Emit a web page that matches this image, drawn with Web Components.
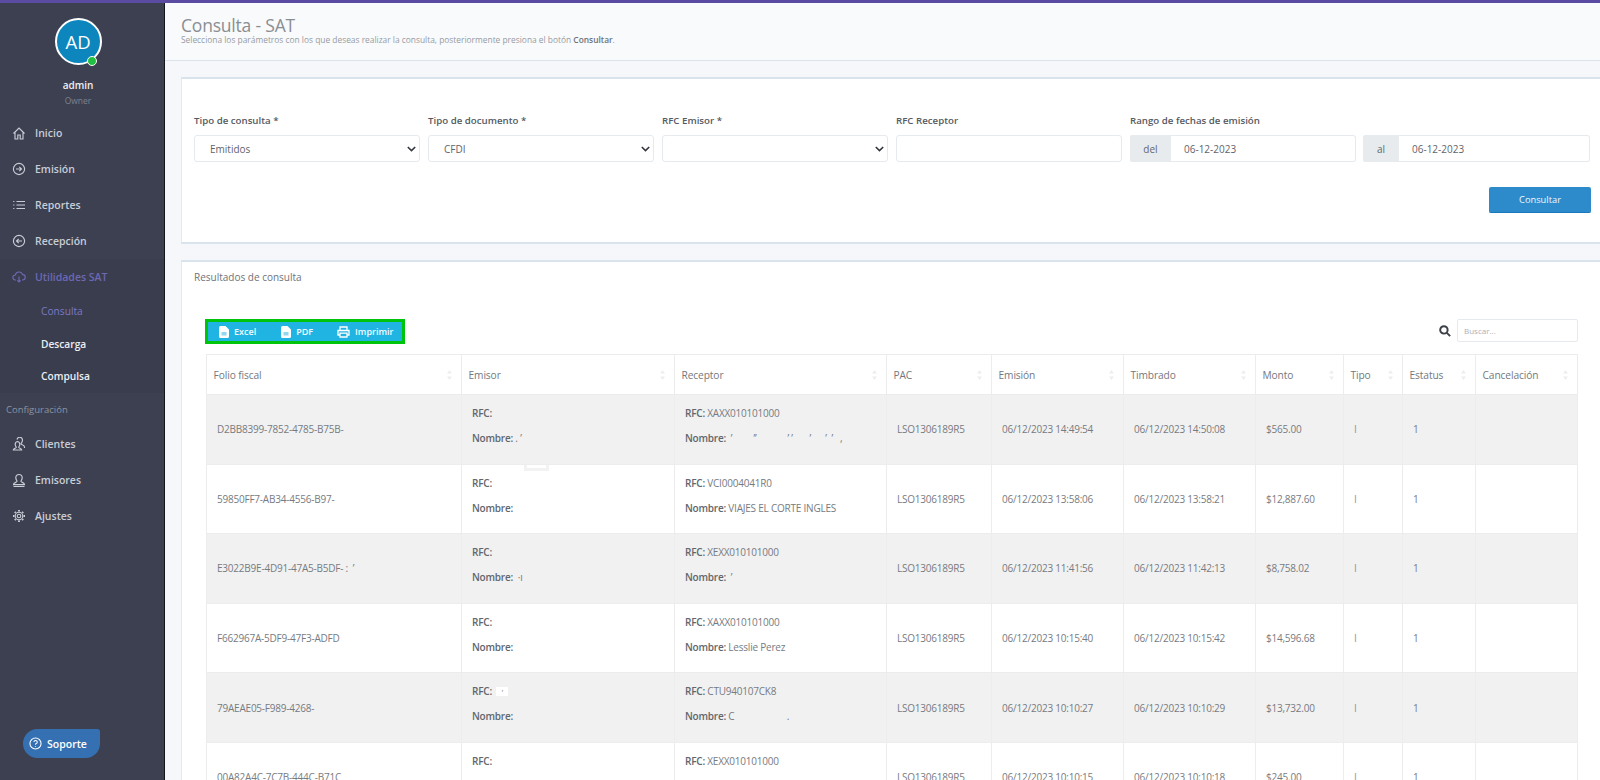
<!DOCTYPE html>
<html lang="es">
<head>
<meta charset="utf-8">
<title>Consulta - SAT</title>
<style>
    html, body { margin: 0; height: 100%; overflow: hidden; background: #f5f7fa; }
    body { font-family: "Open Sans", "Noto Sans", sans-serif; }
</style>
</head>
<body>
<app-shell></app-shell>
<script>
const ICONS = {
    home: '<path d="M1.5 7.5 7 2l5.5 5.5M3 6.5V13h2.8V9h2.4v4H11V6.500"/>',
    right: '<circle cx="7" cy="7" r="5.6"/><path d="M4 7h5.500M7.300 4.800 9.500 7l-2.200 2.200"/>',
    list: '<path d="M4.500 3.500H13M4.500 7H13M4.500 10.500H13M1.200 3.500h1.200M1.200 7h1.200M1.200 10.500h1.200"/>',
    left: '<circle cx="7" cy="7" r="5.600"/><path d="M10 7H4.500M6.700 4.800 4.500 7l2.200 2.200"/>',
    cloud: '<path d="M4 10H3.500A2.500 2.500 0 0 1 3.300 5 3.800 3.800 0 0 1 10.600 4.600 2.700 2.700 0 0 1 10.500 10H10M7 6.500v5.500M5.300 10.300 7 12l1.700-1.700"/>',
    users: '<path d="M5 2.500a2.800 3 0 0 1 5.500.5c0 1.800-1 3-1.500 3.800 0 1 3.500 1.200 3.500 3.200v1M6 4.500c-1.700 0-2.800 1.200-2.800 3 0 1.200.7 2 1.100 2.700 0 1-3 1-3 2.800h8.400c0-1.800-3-1.800-3-2.800.4-.7 1.100-1.500 1.100-2.700 0-1.800-1.100-3-2.800-3z"/>',
    user: '<path d="M7 1.500c-2 0-3.200 1.400-3.200 3.300 0 1.500.8 2.600 1.300 3.400 0 1.200-3.600 1.300-3.600 3.400h11c0-2.100-3.600-2.200-3.600-3.400.5-.8 1.300-1.900 1.300-3.400 0-1.900-1.200-3.300-3.200-3.300zM1.500 13.500h11"/>',
    gear: '<circle cx="7" cy="7" r="1.800"/><circle cx="7" cy="7" r="3.800"/><path d="M7 1v1.500M7 11.500V13M1 7h1.500M11.500 7H13M2.800 2.800l1 1M10.200 10.200l1 1M2.800 11.200l1-1M10.200 3.800l1-1" stroke-width="1.900"/>',
    help: '<circle cx="7" cy="7" r="6"/><path d="M5.300 5.500A1.800 1.800 0 1 1 7.500 7.300c-.4.2-.5.500-.5 1M7 9.700v.8"/>'
};

function icon(name, size) {
    return `<svg width="${size}" height="${size}" viewBox="0 0 14 14" fill="none" stroke="currentColor" stroke-width="1.150">${ICONS[name]}</svg>`;
}

class NavItem extends HTMLElement {
    constructor() {
        super();
        this.attachShadow({ mode: 'open' });
        const name = this.getAttribute('icon');
        this.shadowRoot.innerHTML = `
            <style>
                :host {
                    display: flex;
                    align-items: center;
                    height: 36px;
                    padding-left: 12px;
                    font-size: 10.500px;
                    font-weight: 600;
                    color: #c9cdd6;
                }
                :host([active]) { color: #6d68b4; }
                :host([sub]) { padding-left: 41px; height: 32.500px; color: #eceef2; font-size: 10.200px; }
                :host([sub][active]) { color: #7d78c4; font-weight: 500; }
                svg { width: 14px; height: 14px; margin-right: 9px; flex: none; }
            </style>
            ${name ? icon(name, 14) : ''}<slot></slot>
        `;
    }
}
customElements.define('nav-item', NavItem);

class SideBar extends HTMLElement {
    constructor() {
        super();
        this.attachShadow({ mode: 'open' });
        this.shadowRoot.innerHTML = `
            <style>
                :host {
                    display: block;
                    position: relative;
                    width: 164px;
                    flex: none;
                    background: #3c4051;
                    border-right: 1px solid #15161c;
                }
                .profile { display: flex; flex-direction: column; align-items: center; padding: 15px 8px 0 0; height: 112px; box-sizing: border-box; }
                .avatar {
                    position: relative;
                    width: 47px;
                    height: 47px;
                    box-sizing: border-box;
                    border: 2px solid #fff;
                    border-radius: 50%;
                    background: #0c86bc;
                    color: #fff;
                    font-size: 18.500px;
                    display: flex;
                    align-items: center;
                    justify-content: center;
                }
                .dot {
                    position: absolute;
                    right: 2.500px;
                    bottom: -3px;
                    width: 8px;
                    height: 8px;
                    border: 1px solid #fff;
                    border-radius: 50%;
                    background: #22c040;
                }
                .name { margin-top: 13px; font-size: 10px; font-weight: 600; color: #eef0f4; }
                .role { margin-top: 3px; font-size: 8.500px; color: #7d8291; }
                .group { background: #393d4e; }
                .caption { height: 33px; display: flex; align-items: center; padding-left: 6px; font-size: 9.500px; color: #8b93a3; }
                .help {
                    position: absolute;
                    left: 23px;
                    top: 726px;
                    width: 77px;
                    height: 29px;
                    box-sizing: border-box;
                    padding-left: 6px;
                    display: flex;
                    align-items: center;
                    gap: 5px;
                    background: #3571b2;
                    border-radius: 15px 3px 15px 15px;
                    color: #fff;
                    font-size: 10.500px;
                    font-weight: 600;
                }
            </style>
            <div class="profile">
                <div class="avatar">AD<span class="dot"></span></div>
                <div class="name">admin</div>
                <div class="role">Owner</div>
            </div>
            <nav-item icon="home">Inicio</nav-item>
            <nav-item icon="right">Emisión</nav-item>
            <nav-item icon="list">Reportes</nav-item>
            <nav-item icon="left">Recepción</nav-item>
            <div class="group">
                <nav-item icon="cloud" active>Utilidades SAT</nav-item>
                <nav-item sub active>Consulta</nav-item>
                <nav-item sub>Descarga</nav-item>
                <nav-item sub>Compulsa</nav-item>
            </div>
            <div class="caption">Configuración</div>
            <nav-item icon="users">Clientes</nav-item>
            <nav-item icon="user">Emisores</nav-item>
            <nav-item icon="gear">Ajustes</nav-item>
            <div class="help">${icon('help', 13)}<span>Soporte</span></div>
        `;
    }
}
customElements.define('side-bar', SideBar);

class PageHeader extends HTMLElement {
    constructor() {
        super();
        this.attachShadow({ mode: 'open' });
        this.shadowRoot.innerHTML = `
            <style>
                :host {
                    display: block;
                    box-sizing: border-box;
                    height: 58px;
                    padding: 13px 0 0 16px;
                    background: #f9fafc;
                    border-bottom: 1px solid #dde3ea;
                }
                h1 { margin: 0; font-size: 17.500px; line-height: 18px; font-weight: 400; color: #8a8e93; letter-spacing: -.2px; }
                p { margin: 0; font-size: 8.400px; line-height: 11px; color: #969aa2; letter-spacing: 0; }
                b { font-weight: 600; color: #6d7278; }
            </style>
            <h1>Consulta - SAT</h1>
            <p>Selecciona los parámetros con los que deseas realizar la consulta, posteriormente presiona el botón <b>Consultar</b>.</p>
        `;
    }
}
customElements.define('page-header', PageHeader);

class FormField extends HTMLElement {
    constructor() {
        super();
        this.attachShadow({ mode: 'open' });
        const kind = this.getAttribute('kind') || 'input';
        const chevron = kind === 'select'
            ? '<svg width="9" height="6" viewBox="0 0 9 6" fill="none" stroke="#33373d" stroke-width="1.600"><path d="M.8 1l3.700 3.600L8.200 1"/></svg>'
            : '';
        this.shadowRoot.innerHTML = `
            <style>
                :host { display: block; min-width: 0; }
                label { display: block; height: 28px; padding-top: 7px; box-sizing: border-box; font-size: 9.700px; line-height: 14px; font-weight: 600; color: #555a62; }
                .control {
                    height: 27px;
                    box-sizing: border-box;
                    padding: 0 3px 0 15px;
                    display: flex;
                    align-items: center;
                    justify-content: space-between;
                    background: #fff;
                    border: 1px solid #e6eaee;
                    border-radius: 3px;
                    font-size: 10px;
                    color: #5f646b;
                }
            </style>
            <label>${this.getAttribute('label')}</label>
            <div class="control"><span><slot></slot></span>${chevron}</div>
        `;
    }
}
customElements.define('form-field', FormField);

class DateInput extends HTMLElement {
    constructor() {
        super();
        this.attachShadow({ mode: 'open' });
        this.shadowRoot.innerHTML = `
            <style>
                :host { display: flex; height: 27px; min-width: 0; font-size: 10px; color: #5f646b; }
                .pre { width: ${this.getAttribute('pre-width')}px; flex: none; display: flex; align-items: center; justify-content: center; background: #e8ebee; color: #62676d; border-radius: 2px 0 0 2px; }
                .val { flex: 1; box-sizing: border-box; display: flex; align-items: center; padding-left: 13px; border: 1px solid #e6eaee; border-left: 0; border-radius: 0 3px 3px 0; background: #fff; }
            </style>
            <span class="pre">${this.getAttribute('pre')}</span>
            <span class="val"><slot></slot></span>
        `;
    }
}
customElements.define('date-input', DateInput);

class SearchForm extends HTMLElement {
    constructor() {
        super();
        this.attachShadow({ mode: 'open' });
        this.shadowRoot.innerHTML = `
            <style>
                :host {
                    display: block;
                    box-sizing: border-box;
                    height: 167px;
                    margin: 16px -20px 0 16px;
                    padding: 28px 0 0 12px;
                    background: #fff;
                    border: 1px solid #dde6ee;
                    border-top-width: 2px;
                    border-bottom-width: 2px;
                    border-color: #d9e3ec;
                    border-left-color: #e3e9ef;
                }
                .grid { display: grid; grid-template-columns: repeat(6, 226px); column-gap: 8px; width: 1396px; }
                .range { grid-column: 5 / 7; }
                .range label { display: block; height: 28px; padding-top: 7px; box-sizing: border-box; font-size: 9.700px; line-height: 14px; font-weight: 600; color: #555a62; }
                .dates { display: grid; grid-template-columns: 226px 227px; column-gap: 7px; }
                .actions { display: flex; justify-content: flex-end; width: 1397px; margin-top: 25px; }
                button {
                    width: 102px;
                    height: 26px;
                    padding: 0;
                    border: 0;
                    border-bottom: 1px solid #1a79bd;
                    border-radius: 2px;
                    background: #2d8bcb;
                    color: #f2f8fc;
                    font: 500 9.300px "Open Sans", sans-serif;
                }
            </style>
            <div class="grid">
                <form-field label="Tipo de consulta *" kind="select">Emitidos</form-field>
                <form-field label="Tipo de documento *" kind="select">CFDI</form-field>
                <form-field label="RFC Emisor *" kind="select"></form-field>
                <form-field label="RFC Receptor"></form-field>
                <div class="range">
                    <label>Rango de fechas de emisión</label>
                    <div class="dates">
                        <date-input pre="del" pre-width="41">06-12-2023</date-input>
                        <date-input pre="al" pre-width="36">06-12-2023</date-input>
                    </div>
                </div>
            </div>
            <div class="actions"><button>Consultar</button></div>
        `;
    }
}
customElements.define('search-form', SearchForm);

class ExportBar extends HTMLElement {
    constructor() {
        super();
        this.attachShadow({ mode: 'open' });
        const doc = `<svg width="10" height="12" viewBox="0 0 10 12"><path fill="#fff" d="M1.500 0H6.500L10 3.500V10.500A1.500 1.500 0 0 1 8.500 12H1.500A1.500 1.500 0 0 1 0 10.500V1.500A1.500 1.500 0 0 1 1.500 0Z"/><rect x="2.500" y="6" width="5" height="3.500" fill="#8fd6ee"/></svg>`;
        const print = `<svg width="13" height="12" viewBox="0 0 13 12" fill="none" stroke="#fff" stroke-width="1.300"><path d="M3 4V1h7v3M3 9H1V4.500h11V9h-2M3 7.200h7V11H3z"/></svg>`;
        this.shadowRoot.innerHTML = `
            <style>
                :host {
                    display: flex;
                    align-items: center;
                    box-sizing: border-box;
                    width: 200px;
                    height: 25px;
                    border: 3px solid #00c40b;
                    background: #20b4e3;
                    color: #f4fbfe;
                    font-size: 9px;
                    font-weight: 600;
                }
                span { display: flex; align-items: center; gap: 5px; }
                span:nth-of-type(1) { margin-left: 11px; }
                span:nth-of-type(2) { margin-left: 25px; }
                span:nth-of-type(3) { margin-left: 24px; }
            </style>
            <span>${doc}Excel</span>
            <span>${doc}PDF</span>
            <span>${print}Imprimir</span>
        `;
    }
}
customElements.define('export-bar', ExportBar);

class TableSearch extends HTMLElement {
    constructor() {
        super();
        this.attachShadow({ mode: 'open' });
        this.shadowRoot.innerHTML = `
            <style>
                :host { display: flex; align-items: center; gap: 6px; }
                div { box-sizing: border-box; width: 121px; height: 23px; padding-left: 6px; display: flex; align-items: center; border: 1px solid #e6eaee; border-radius: 2px; font-size: 8px; color: #adb1b7; background: #fff; }
            </style>
            <svg width="12" height="12" viewBox="0 0 11 11" fill="none" stroke="#3d4147" stroke-width="1.800"><circle cx="4.500" cy="4.500" r="3.400"/><path d="M7 7l3.200 3.200"/></svg>
            <div>Buscar...</div>
        `;
    }
}
customElements.define('table-search', TableSearch);

const COLUMNS = [
    ['Folio fiscal', 255], ['Emisor', 213], ['Receptor', 212], ['PAC', 105], ['Emisión', 132],
    ['Timbrado', 132], ['Monto', 88], ['Tipo', 59], ['Estatus', 73], ['Cancelación', 102]
];

const ROWS = [
    { folio: 'D2BB8399-7852-4785-B75B-', e: ['', '. ’'], r: ['XAXX010101000', ' ’         ’’             ’ ’       ’      ’  ’   ,'], em: '06/12/2023 14:49:54', ti: '06/12/2023 14:50:08', monto: '$565.00' },
    { folio: '59850FF7-AB34-4556-B97-', e: ['', ''], r: ['VCI0004041R0', 'VIAJES EL CORTE INGLES'], em: '06/12/2023 13:58:06', ti: '06/12/2023 13:58:21', monto: '$12,887.60', patch: true },
    { folio: 'E3022B9E-4D91-47A5-B5DF- :  ’', e: ['', ' ·ı'], r: ['XEXX010101000', ' ’'], em: '06/12/2023 11:41:56', ti: '06/12/2023 11:42:13', monto: '$8,758.02' },
    { folio: 'F662967A-5DF9-47F3-ADFD', e: ['', ''], r: ['XAXX010101000', 'Lesslie Perez'], em: '06/12/2023 10:15:40', ti: '06/12/2023 10:15:42', monto: '$14,596.68' },
    { folio: '79AEAE05-F989-4268-', e: ['<i class="blank">’</i>', ''], r: ['CTU940107CK8', 'C                      .'], em: '06/12/2023 10:10:27', ti: '06/12/2023 10:10:29', monto: '$13,732.00' },
    { folio: '00A82A4C-7C7B-444C-B71C', e: ['', ''], r: ['XEXX010101000', ''], em: '06/12/2023 10:10:15', ti: '06/12/2023 10:10:18', monto: '$245.00' }
];

class DataTable extends HTMLElement {
    constructor() {
        super();
        this.attachShadow({ mode: 'open' });
        const sort = '<svg width="5" height="10" viewBox="0 0 5 10" fill="#ebedef"><path d="M2.500 0 5 3.500H0zM2.500 10 0 6.500h5z"/></svg>';
        const party = ([rfc, name]) => `<p><b>RFC:</b> ${rfc}</p><p><b>Nombre:</b> ${name}</p>`;
        const head = COLUMNS.map(([t]) => `<th><div>${t}${sort}</div></th>`).join('');
        const cols = COLUMNS.map(([, w]) => `<col style="width:${w}px">`).join('');
        const body = ROWS.map((r) => `
            <tr>
                <td>${r.folio}</td>
                <td class="party">${r.patch ? '<span class="patch"></span>' : ''}${party(r.e)}</td>
                <td class="party">${party(r.r)}</td>
                <td>LSO1306189R5</td>
                <td>${r.em}</td>
                <td>${r.ti}</td>
                <td>${r.monto}</td>
                <td class="tipo">I</td>
                <td>1</td>
                <td></td>
            </tr>`).join('');
        this.shadowRoot.innerHTML = `
            <style>
                :host { display: block; width: 1372px; margin-top: 10px; font-size: 10px; color: #777b81; }
                table { border-collapse: collapse; table-layout: fixed; width: 1371px; }
                th, td { border: 1px solid #ececec; padding: 0 0 0 10px; overflow: hidden; white-space: pre; letter-spacing: -.22px; }
                th { height: 40px; padding: 0 9px 0 6.500px; box-sizing: border-box; font-weight: 500; font-size: 10.200px; color: #74787e; background: #fff; letter-spacing: -.1px; }
                th div { display: flex; justify-content: space-between; align-items: center; }
                th svg { flex: none; }
                td { height: 69.600px; box-sizing: border-box; }
                tr:nth-child(odd) td { background: #f1f1f1; border-color: #ededed; }
                .tipo { color: #8f959c; }
                .party { vertical-align: top; padding-top: 11px; position: relative; overflow: visible; }
                p { margin: 0 0 10px; line-height: 15px; height: 15px; }
                b { font-weight: 600; color: #62666c; }
                .blank { display: inline-block; width: 12px; height: 9px; margin-left: 2px; background: #fff; font-style: normal; text-align: center; line-height: 9px; font-size: 8px; }
                .patch { position: absolute; left: 62px; top: 0; width: 19px; height: 3px; border: 3px solid #f2f2f2; border-top: 0; background: #fff; }
            </style>
            <table>
                <colgroup>${cols}</colgroup>
                <thead><tr>${head}</tr></thead>
                <tbody>${body}</tbody>
            </table>
        `;
    }
}
customElements.define('data-table', DataTable);

class ResultsCard extends HTMLElement {
    constructor() {
        super();
        this.attachShadow({ mode: 'open' });
        this.shadowRoot.innerHTML = `
            <style>
                :host {
                    display: block;
                    box-sizing: border-box;
                    margin: 16px -20px 0 16px;
                    padding-left: 12px;
                    background: #fff;
                    border-top: 2px solid #d9e3ec;
                    border-left: 1px solid #e3e9ef;
                }
                .title { height: 30px; display: flex; align-items: center; font-size: 10px; color: #6f7379; }
                .tools { display: flex; justify-content: space-between; align-items: flex-start; width: 1384px; margin: 27px 0 0; padding-left: 11px; box-sizing: border-box; }
                .wrap { padding-left: 12px; }
            </style>
            <div class="title">Resultados de consulta</div>
            <div class="tools"><export-bar></export-bar><table-search></table-search></div>
            <div class="wrap"><data-table></data-table></div>
        `;
    }
}
customElements.define('results-card', ResultsCard);

class AppShell extends HTMLElement {
    constructor() {
        super();
        this.attachShadow({ mode: 'open' });
        this.shadowRoot.innerHTML = `
            <style>
                :host { display: flex; flex-direction: column; height: 780px; overflow: hidden; }
                .bar { height: 3px; flex: none; background: #5c4ba3; }
                .row { flex: 1; display: flex; min-height: 0; }
                main { flex: 1; min-width: 0; overflow: hidden; background: #f5f7fa; }
            </style>
            <div class="bar"></div>
            <div class="row">
                <side-bar></side-bar>
                <main>
                    <page-header></page-header>
                    <search-form></search-form>
                    <results-card></results-card>
                </main>
            </div>
        `;
    }
}
customElements.define('app-shell', AppShell);
</script>
</body>
</html>
